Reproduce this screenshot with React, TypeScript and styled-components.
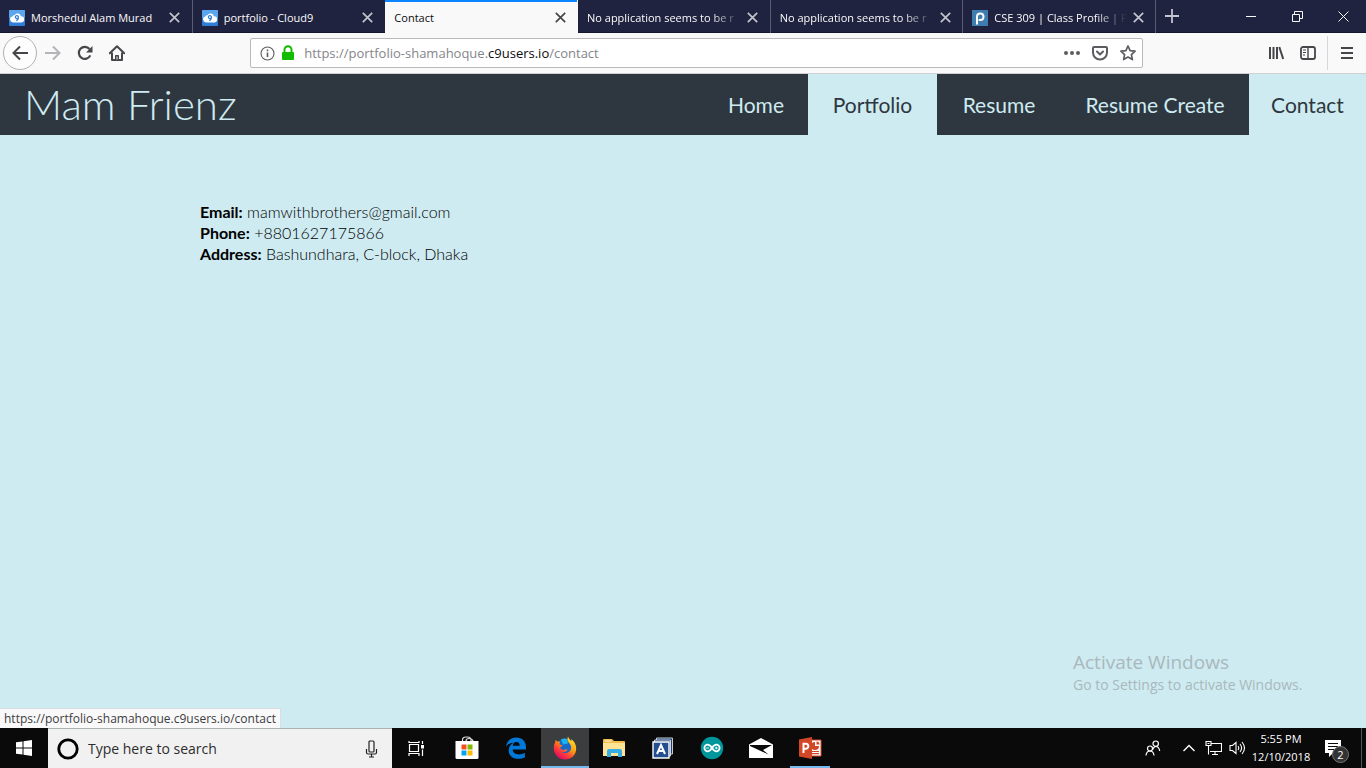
import React from "react";
import styled, { createGlobalStyle, css } from "styled-components";

const ui = `"Open Sans", "Noto Sans", sans-serif`;
const display = `Lato, "Open Sans", sans-serif`;
const ice = "#ceebf1";
const slate = "#2e3740";

const GlobalStyle = createGlobalStyle`
  *, *::before, *::after { box-sizing: border-box; }
  body { margin: 0; background: ${ice}; }
  button, input { font: inherit; color: inherit; }
  button { border: 0; padding: 0; background: none; }
  svg { display: block; flex: none; }
`;

const Screen = styled.div`
  display: flex;
  flex-direction: column;
  min-height: 100vh;
  font-family: ${ui};
`;

/* Browser tabs */
const TabBar = styled.div`
  display: flex;
  height: 33px;
  background: #20233f;
  border-bottom: 1px solid #14162b;
  color: #f9f9fa;
`;

const TabStrip = styled.div`
  display: flex;
  flex: 0 1 1156px;
  min-width: 0;
`;

const Tab = styled.div<{ $active?: boolean; $edge?: boolean }>`
  display: flex;
  align-items: center;
  flex: 1 1 0;
  min-width: 0;
  height: 33px;
  padding: 2px 10px 0 9px;
  border-right: 1px solid ${(p) => (p.$edge ? "transparent" : "#5a5c72")};
  ${(p) =>
    p.$active &&
    css`
      background: #f9f9fa;
      color: #0c0c0d;
      box-shadow: inset 0 2px #0a84ff;
      border-right-color: #f9f9fa;
    `}
`;

const TabTitle = styled.button`
  display: flex;
  align-items: center;
  gap: 6px;
  flex: 1;
  min-width: 0;
  height: 28px;
  font-size: 11px;
  font-weight: 500;
  text-align: left;
`;

const TabText = styled.span<{ $fade?: boolean }>`
  flex: 1;
  overflow: hidden;
  white-space: nowrap;
  ${(p) =>
    p.$fade &&
    css`
      margin-right: 4px;
      mask-image: linear-gradient(to left, transparent, #000 32px);
    `}
`;

const IconButton = styled.button<{ $w?: number; $h?: number }>`
  display: flex;
  align-items: center;
  justify-content: center;
  flex: none;
  width: ${(p) => p.$w ?? 32}px;
  height: ${(p) => p.$h ?? 32}px;
`;

const WindowButtons = styled.div`
  display: flex;
  margin-left: auto;
`;

/* Address toolbar */
const Toolbar = styled.div`
  display: flex;
  align-items: center;
  height: 41px;
  padding: 0 3px;
  background: #f9f9fa;
  border-bottom: 1px solid #d0d0d4;
  color: #45454a;
`;

const BackButton = styled(IconButton)`
  width: 34px;
  height: 34px;
  border: 1px solid #b1b1b5;
  border-radius: 50%;
  background: #fdfdfd;
`;

const Spring = styled.div`
  flex: 2 1 0;
`;

const AddressBar = styled.form`
  display: flex;
  align-items: center;
  flex: 15 1 0;
  min-width: 0;
  height: 30px;
  padding: 0 3px 0 9px;
  gap: 6px;
  background: #fff;
  border: 1px solid #b9b9bc;
  border-radius: 2px;
  color: #5d5d61;
`;

const Address = styled.div`
  flex: 1;
  min-width: 0;
  padding-left: 3px;
  overflow: hidden;
  white-space: nowrap;
  font-size: 13px;
  color: #85858a;

  b { color: #0c0c0d; font-weight: 400; }
`;

const Divider = styled.span`
  width: 1px;
  height: 34px;
  margin: 0 3px;
  background: #d7d7db;
`;

/* Web page */
const Page = styled.div`
  position: relative;
  display: flex;
  flex-direction: column;
  flex: 1;
  background: ${ice};
  font-family: ${display};
`;

const SiteHeader = styled.header`
  display: flex;
  justify-content: space-between;
  height: 61px;
  background: ${slate};
  color: ${ice};
`;

const Brand = styled.h1`
  margin: 0;
  padding-left: 24px;
  font-size: 42px;
  font-weight: 300;
  line-height: 60px;
  white-space: nowrap;
`;

const Nav = styled.nav`
  display: flex;
`;

const NavLink = styled.a<{ $lit?: boolean; $w: number }>`
  width: ${(p) => p.$w}px;
  text-align: center;
  font-size: 21px;
  line-height: 61px;
  white-space: nowrap;
  text-decoration: none;
  color: ${(p) => (p.$lit ? slate : ice)};
  background: ${(p) => (p.$lit ? ice : slate)};
`;

const ContactList = styled.address`
  padding: 66px 24px 0 200px;
  font-size: 16px;
  font-style: normal;
  font-weight: 300;
  line-height: 21px;
  color: #000;

  b { font-weight: 700; }
`;

const StatusUrl = styled.div`
  position: absolute;
  left: 0;
  bottom: 0;
  height: 20px;
  padding: 0 4px;
  background: #f9f9fa;
  border: solid #d7dde0;
  border-width: 1px 1px 0 0;
  font: 12px/20px ${ui};
  color: #3c3c40;
`;

const Watermark = styled.div`
  position: absolute;
  right: 56px;
  bottom: 33px;
  width: 237px;
  font: 14px/20px ${ui};
  color: #a9b8bc;
  white-space: nowrap;
`;

const WatermarkTitle = styled.div`
  font-size: 19px;
  line-height: 26px;
`;

/* Windows taskbar */
const Taskbar = styled.footer`
  display: flex;
  height: 40px;
  background: #0a0a0a;
  color: #fff;
`;

const SearchBox = styled.label`
  display: flex;
  align-items: center;
  flex: 0 1 344px;
  padding: 0 14px 0 9px;
  gap: 9px;
  background: #f1f1f1;
  border-top: 1px solid #adb3b5;
  color: #111;
`;

const SearchInput = styled.input`
  flex: 1;
  min-width: 0;
  padding: 0;
  border: 0;
  outline: 0;
  background: none;
  font-size: 14px;

  &::placeholder { color: #2d2d2d; opacity: 1; }
`;

const AppRow = styled.div`
  display: flex;
  gap: 1px;
`;

const AppButton = styled(IconButton)<{ $active?: boolean }>`
  width: 48px;
  height: 40px;
  background: ${(p) => (p.$active ? "#3c3d3e" : "none")};
  box-shadow: ${(p) => (p.$active ? "inset 0 -2px #76b9ed" : "none")};
`;

const TaskViewButton = styled(AppButton)`
  margin-right: 2px;
`;

const RunningButton = styled(AppButton)`
  width: 40px;
  margin-left: 4px;
  box-shadow: inset 0 -2px #76b9ed;
`;

const Tray = styled.div`
  display: flex;
  align-items: center;
  margin-left: auto;
`;

const Clock = styled.time`
  width: 64px;
  font-size: 11px;
  line-height: 18px;
  text-align: center;
  white-space: nowrap;
`;

const Notifications = styled(IconButton)`
  position: relative;
  width: 40px;
  height: 40px;
`;

const Badge = styled.span`
  position: absolute;
  left: 19px;
  top: 18px;
  width: 17px;
  height: 17px;
  border: 1px solid #777;
  border-radius: 50%;
  background: #333;
  font-size: 11px;
  line-height: 15px;
  text-align: center;
`;

const ShowDesktop = styled.button`
  width: 5px;
  height: 40px;
  margin-left: 8px;
  border-left: 1px solid #555;
`;

type Stroke = { s?: number; w?: number; d: string; c?: string; box?: number; fill?: string };
const Line = ({ s = 16, w = 2, d, c = "currentColor", box = 16, fill = "none" }: Stroke) => (
  <svg width={s} height={s} viewBox={`0 0 ${box} ${box}`} fill={fill} stroke={c} strokeWidth={w} aria-hidden>
    <path d={d} />
  </svg>
);

const CloudIcon = () => (
  <svg width="16" height="16" viewBox="0 0 16 16" aria-hidden>
    <rect width="16" height="16" rx="1" fill="#2f7fd8" />
    <rect width="16" height="8" rx="1" fill="#5ba5ee" />
    <path d="M4 12.5a3 3 0 0 1-.7-5.9 2.7 2.7 0 0 1 2.5-1.7A3.5 3.5 0 0 1 12 6.3a3.1 3.1 0 0 1 .2 6.2z" fill="#fff" />
    <path d="M9.4 7a1.5 1.4 0 1 0-1.3 1.5c.8 0 1.3-.5 1.3-1.5 0 2-.7 3.300-2.200 3.600" fill="none" stroke="#2f7fd8" strokeWidth="1.200" />
  </svg>
);

const PiazzaIcon = () => (
  <svg width="16" height="16" viewBox="0 0 16 16" aria-hidden>
    <rect width="16" height="16" fill="#3f7caf" />
    <path d="M5 14.500V6.500q0-3 3.300-3 3.200 0 3.200 3.300T8.300 10q-1 0-1.600-.5" fill="none" stroke="#fff" strokeWidth="2" />
  </svg>
);

const HomeIcon = () => (
  <svg width="16" height="16" viewBox="0 0 16 16" fill="none" stroke="currentColor" strokeWidth="2" strokeLinejoin="round" aria-hidden>
    <path d="M.8 8.300 8 1.300l7.200 7" strokeLinecap="round" />
    <path d="M3 7.500V15h10V7.500" />
    <path d="M6.500 15v-4.500h3V15z" fill="currentColor" strokeWidth="1" />
    <path d="M8 11.500v3" stroke="#f9f9fa" strokeWidth="1" />
  </svg>
);

const ReloadIcon = () => (
  <svg width="16" height="16" viewBox="0 0 16 16" fill="none" stroke="currentColor" strokeWidth="2.200" aria-hidden>
    <path d="M13.300 10.400A6 6 0 1 1 12.500 4" />
    <path d="M15.500 1v6.500H9z" fill="currentColor" stroke="none" />
  </svg>
);

const InfoIcon = () => (
  <svg width="15" height="15" viewBox="0 0 15 15" aria-hidden>
    <circle cx="7.500" cy="7.500" r="6.500" fill="none" stroke="#5d5d61" strokeWidth="1.100" />
    <path d="M7.500 6.500v4.500M7.500 3.500v1.800" stroke="#5d5d61" strokeWidth="1.600" />
  </svg>
);

const LockIcon = () => (
  <svg width="14" height="16" viewBox="0 0 14 16" aria-hidden>
    <path d="M3.500 8V4.800a3.500 3.500 0 0 1 7 0V8" fill="none" stroke="#12bc00" strokeWidth="2" />
    <rect x="1" y="7" width="12" height="8" rx="1" fill="#12bc00" />
  </svg>
);

const DotsIcon = () => (
  <svg width="16" height="16" viewBox="0 0 16 16" fill="currentColor" aria-hidden>
    <circle cx="2" cy="8" r="2" />
    <circle cx="8" cy="8" r="2" />
    <circle cx="14" cy="8" r="2" />
  </svg>
);

const PocketIcon = () => (
  <svg width="16" height="16" viewBox="0 0 16 16" fill="none" stroke="currentColor" strokeWidth="2" strokeLinejoin="round" strokeLinecap="round" aria-hidden>
    <path d="M2 2h12q1 0 1 1v4.500a7 7 0 0 1-14 0V3q0-1 1-1z" />
    <path d="m5 6.500 3 3 3-3" />
  </svg>
);

const StarIcon = () => (
  <svg width="16" height="16" viewBox="0 0 16 16" fill="none" stroke="currentColor" strokeWidth="1.700" strokeLinejoin="round" aria-hidden>
    <path d="m8 1 2.100 4.600 5 .6-3.700 3.400 1 5L8 12.100l-4.400 2.500 1-5L.9 6.200l5-.6z" />
  </svg>
);

const LibraryIcon = () => (
  <svg width="16" height="16" viewBox="0 0 16 16" fill="none" stroke="currentColor" strokeWidth="2" aria-hidden>
    <path d="M2 2v12M5.500 2v12M9 2v12M11.300 2l3.900 12" />
  </svg>
);

const SidebarIcon = () => (
  <svg width="16" height="16" viewBox="0 0 16 16" fill="none" stroke="currentColor" strokeWidth="1.800" aria-hidden>
    <rect x="1" y="2" width="14" height="12" rx="2" />
    <path d="M8 2v12" strokeWidth="1.400" />
    <path d="M3 5h3M3 7.500h3M3 10h2" strokeWidth="1" />
  </svg>
);

const RestoreIcon = () => (
  <svg width="11" height="11" viewBox="0 0 11 11" fill="none" stroke="currentColor" aria-hidden>
    <path d="M.5 3.500h7v7h-7zM2.500 3.500v-3h8v7h-3" />
  </svg>
);

const WindowsIcon = () => (
  <svg width="16" height="16" viewBox="0 0 16 16" fill="#fff" aria-hidden>
    <path d="M0 2.300 6.500 1.400V7.500H0zM7.500 1.200 16 0v7.500H7.500zM0 8.500h6.500v6.100L0 13.700zM7.500 8.500H16V16l-8.500-1.200z" />
  </svg>
);

const CortanaIcon = () => (
  <svg width="22" height="22" viewBox="0 0 22 22" aria-hidden>
    <circle cx="11" cy="11" r="9.200" fill="none" stroke="#000" strokeWidth="2.800" />
  </svg>
);

const MicIcon = () => (
  <svg width="13" height="18" viewBox="0 0 13 18" fill="none" stroke="#222" strokeWidth="1.200" aria-hidden>
    <rect x="4" y="1" width="5" height="11" rx="1" />
    <path d="M1.500 9v3.500q0 1.500 1.500 1.500h7q1.500 0 1.500-1.500V9M6.500 14v3M4 17h5" />
  </svg>
);

const TaskViewIcon = () => (
  <svg width="17" height="17" viewBox="0 0 17 17" fill="none" stroke="#fff" strokeWidth="1.200" aria-hidden>
    <path d="M1.500 4.500h9v7h-9zM1 1v1.500h10V1M1 16v-2.500h10V16M14.500 1v3M14.500 9.500V16" />
    <rect x="13" y="5" width="3" height="3.500" fill="#fff" stroke="none" />
  </svg>
);

const StoreIcon = () => (
  <svg width="24" height="24" viewBox="0 0 24 24" aria-hidden>
    <path d="M7.500 6V4Q7.500 1 11 1h1.500q3.500 0 3.500 3v2M11 6V5q0-2.500 3-2.500T18 5v1" fill="none" stroke="#ddd" strokeWidth="1.200" />
    <path d="M.5 5h23v16.500q0 1.500-1.500 1.500H2Q.5 23 .5 21.500z" fill="#fff" />
    <path d="M6.500 8.500h5v5h-5z" fill="#f25022" />
    <path d="M12.500 8.500h5v5h-5z" fill="#7fba00" />
    <path d="M6.500 14.500h5v5h-5z" fill="#00a4ef" />
    <path d="M12.500 14.500h5v5h-5z" fill="#ffb900" />
  </svg>
);

const EdgeIcon = () => (
  <svg width="20" height="22" viewBox="0 0 20 22" aria-hidden>
    <path
      d="M0 9.800C.8 4 4.800.5 10.300.5 16.500.5 20 4.700 20 10v2.500H6.700c.2 3.300 2.900 4.900 6.300 4.900 2.300 0 4.200-.6 5.900-1.700v4.500c-1.900 1.100-4.300 1.600-6.900 1.600-5.500 0-9.300-3.300-9.300-8.300 0-3.300 1.600-6.100 4.700-7.700C4.500 6 1.500 7.400 0 9.800zm6.800-1.100h6.900c0-2.300-1.200-3.600-3.300-3.600-2 0-3.300 1.400-3.600 3.600z"
      fill="#0078d7"
      fillRule="evenodd"
    />
  </svg>
);

const FirefoxIcon = () => (
  <svg width="24" height="24" viewBox="0 0 24 24" aria-hidden>
    <defs>
      <linearGradient id="fox" x1="0.900" y1="0" x2="0.200" y2="1">
        <stop offset="0.100" stopColor="#ffe226" />
        <stop offset="0.450" stopColor="#ff980e" />
        <stop offset="0.700" stopColor="#ff3b3d" />
        <stop offset="1" stopColor="#d8006e" />
      </linearGradient>
    </defs>
    <circle cx="12" cy="10.500" r="8" fill="#1668c9" />
    <path d="M8 3.500q3-1.500 6-.5l1 4.500-5 1z" fill="#1ab4f0" />
    <path
      d="M15 .5c.4 2 2.300 3.200 3.400 4.800-.2-.9-.2-1.400 0-2.100 2.900 2 4.800 5.700 4.800 9.300C23.200 19 18.300 23.500 12 23.500S.8 18.600.8 12.500c0-2.600.4-4.500 1.400-6.200L2.500 4l1.900 1.600c1-.2 1.900-.1 2.800.2-.7.900-.8 1.900-.5 2.700l2.800.7c-.3 1-1.500 1.500-2.300 2.100.3 2.300 2.900 3.300 5 2.300 1-.5 1.700-.4 2.300.1-1.100 2.300-3.800 3-6 2.200 4 2.800 9.600.5 9.600-4.300 0-2-.9-3.500-1.900-4.400C14.700 5.600 13.800 3 15 .5z"
      fill="url(#fox)"
    />
  </svg>
);

const FolderIcon = () => (
  <svg width="22" height="20" viewBox="0 0 22 20" aria-hidden>
    <path d="M0 2q0-1 1-1h8l2 2h10q1 0 1 1v14H0z" fill="#f0bd4b" />
    <path d="M0 5h22v13H0z" fill="#ffe394" />
    <path d="M2 2.500h6v1H2z" fill="#fff" />
    <path d="M4 19v-6q0-2 2-2h11q2 0 2 2v6h-4v-4H8v4z" fill="#36aee5" />
  </svg>
);

const CardsIcon = () => (
  <svg width="22" height="22" viewBox="0 0 22 22" aria-hidden>
    <path d="M4.500 1h16v16h-16z" fill="#1b3f74" stroke="#c4cbd3" />
    <path d="M2.500 3h16v16h-16z" fill="#1b3f74" stroke="#d2d7dd" />
    <path d="M1 5h16v16H1z" fill="#234f91" stroke="#fff" strokeWidth="1.400" />
    <path d="m5 17 4-9 4 9M6.500 14h5" fill="none" stroke="#fff" strokeWidth="2" />
  </svg>
);

const ArduinoIcon = () => (
  <svg width="24" height="24" viewBox="0 0 24 24" fill="none" stroke="#fff" aria-hidden>
    <circle cx="12" cy="12" r="11.200" fill="#00979c" stroke="none" />
    <path d="M12 12C10.500 9.700 9.300 8.700 7.700 8.700a3.300 3.300 0 0 0 0 6.600c1.600 0 2.800-1 4.300-3.300s2.700-3.300 4.300-3.300a3.300 3.300 0 0 1 0 6.600c-1.600 0-2.800-1-4.300-3.300z" strokeWidth="1.800" />
    <path d="M6.300 12h2.600M15 12h2.600M16.300 10.700v2.600" />
  </svg>
);

const MailIcon = () => (
  <svg width="24" height="20" viewBox="0 0 24 20" aria-hidden>
    <path d="M0 6.500 12 0l12 6.500V20H0z" fill="#fff" />
    <path d="M1 7h22l-9 5 5.500 4.500L1 8z" fill="#0a0a0a" />
  </svg>
);

const SlidesIcon = () => (
  <svg width="24" height="22" viewBox="0 0 24 22" aria-hidden>
    <path d="M11 3h12v16H11z" fill="#fff" stroke="#d24726" />
    <path d="M17 5v4h4a4 4 0 1 1-4-4z" fill="#d24726" />
    <path d="M18.500 4.500a3 3 0 0 1 3 3h-3z" fill="#d24726" />
    <path d="M14 14.500h7M14 16.700h7" stroke="#d24726" strokeWidth="1.200" />
    <path d="M1 2.500 14 0v22L1 19.500z" fill="#d24726" />
    <path d="M5.500 16V6.800h2.300a2.400 2.400 0 0 1 0 5H5.500" fill="none" stroke="#fff" strokeWidth="2" />
  </svg>
);

const PeopleIcon = () => (
  <svg width="16" height="16" viewBox="0 0 16 16" fill="none" stroke="#fff" strokeWidth="1.200" aria-hidden>
    <circle cx="10.700" cy="3.700" r="2.700" />
    <path d="M8 9.500q.5-3 2.700-3 3.300 0 4 4.500" />
    <circle cx="5" cy="8.500" r="2.500" />
    <path d="M1 15.500Q1.500 11 5 11t4 4.500" />
  </svg>
);

const NetworkIcon = () => (
  <svg width="17" height="16" viewBox="0 0 17 16" fill="none" stroke="#fff" strokeWidth="1.100" aria-hidden>
    <path d="M6 3.500h10.500v8H5M3.500 6v8.500M7 14.500h6M10 11.500v3" />
    <path d="M1 1.500h5v4H1zM2.500 3.500h2" />
  </svg>
);

const SpeakerIcon = () => (
  <svg width="17" height="16" viewBox="0 0 17 16" fill="none" stroke="#fff" strokeWidth="1.100" aria-hidden>
    <path d="M1 5.500h2.500L7 2.500v11l-3.500-3H1zM9 6q1.500 2 0 4M11 4q3.200 4 0 8M13 2q5 6 0 12" />
  </svg>
);

const NoteIcon = () => (
  <svg width="16" height="17" viewBox="0 0 16 17" aria-hidden>
    <path d="M0 0h16v13H8l-4 4v-4H0z" fill="#fff" />
    <path d="M3 3.500h10M3 6.500h10M3 9.500h6" stroke="#0a0a0a" strokeWidth="1.200" />
  </svg>
);

const cross = "M3 3l10 10M13 3L3 13";

const tabs = [
  { title: "Morshedul Alam Murad", icon: <CloudIcon /> },
  { title: "portfolio - Cloud9", icon: <CloudIcon />, edge: true },
  { title: "Contact", active: true },
  { title: "No application seems to be r", fade: true },
  { title: "No application seems to be r", fade: true },
  { title: "CSE 309 | Class Profile | Pi", icon: <PiazzaIcon />, fade: true },
];

const links = [
  { label: "Home", w: 104 },
  { label: "Portfolio", w: 129, lit: true },
  { label: "Resume", w: 124 },
  { label: "Resume Create", w: 188 },
  { label: "Contact", w: 117, lit: true },
];

export default function App() {
  return (
    <Screen>
      <GlobalStyle />
      <TabBar>
        <TabStrip>
          {tabs.map((t, i) => (
            <Tab key={i} $active={t.active} $edge={t.edge}>
              <TabTitle>
                {t.icon}
                <TabText $fade={t.fade}>{t.title}</TabText>
              </TabTitle>
              <IconButton $w={14} $h={28} aria-label="Close tab">
                <Line s={15} w={1.8} d={cross} c={t.active ? "#45454a" : "#c3c4cd"} />
              </IconButton>
            </Tab>
          ))}
        </TabStrip>
        <IconButton aria-label="New tab">
          <Line w={1.8} d="M8 1v14M1 8h14" c="#c3c4cd" />
        </IconButton>
        <WindowButtons>
          <IconButton $w={46} aria-label="Minimize">
            <Line s={10} box={10} w={1} d="M0 5.500h10" />
          </IconButton>
          <IconButton $w={46} aria-label="Restore">
            <RestoreIcon />
          </IconButton>
          <IconButton $w={46} aria-label="Close">
            <Line s={11} box={11} w={1} d="M.5.5l10 10M10.500.5l-10 10" />
          </IconButton>
        </WindowButtons>
      </TabBar>

      <Toolbar>
        <BackButton aria-label="Back">
          <Line d="M16 8H1.500M8 1.500 1.500 8 8 14.500" />
        </BackButton>
        <IconButton aria-label="Forward">
          <Line d="M0 8h14.500M8 1.500 14.500 8 8 14.500" c="#b4b4b7" />
        </IconButton>
        <IconButton aria-label="Reload">
          <ReloadIcon />
        </IconButton>
        <IconButton aria-label="Home">
          <HomeIcon />
        </IconButton>
        <Spring />
        <AddressBar>
          <InfoIcon />
          <LockIcon />
          <Address>
            https://portfolio-shamahoque.<b>c9users.io</b>/contact
          </Address>
          <IconButton type="button" $w={22} $h={28} aria-label="Page actions">
            <DotsIcon />
          </IconButton>
          <IconButton type="button" $w={22} $h={28} aria-label="Save to Pocket">
            <PocketIcon />
          </IconButton>
          <IconButton type="button" $w={22} $h={28} aria-label="Bookmark">
            <StarIcon />
          </IconButton>
        </AddressBar>
        <Spring />
        <IconButton aria-label="Library">
          <LibraryIcon />
        </IconButton>
        <IconButton aria-label="Sidebars">
          <SidebarIcon />
        </IconButton>
        <Divider />
        <IconButton aria-label="Menu">
          <Line d="M2 3h12M2 8h12M2 13h12" />
        </IconButton>
      </Toolbar>

      <Page>
        <SiteHeader>
          <Brand>Mam Frienz</Brand>
          <Nav>
            {links.map((l) => (
              <NavLink key={l.label} href="#" $lit={l.lit} $w={l.w}>
                {l.label}
              </NavLink>
            ))}
          </Nav>
        </SiteHeader>
        <ContactList>
          <div><b>Email:</b> mamwithbrothers@gmail.com</div>
          <div><b>Phone:</b> +8801627175866</div>
          <div><b>Address:</b> Bashundhara, C-block, Dhaka</div>
        </ContactList>
        <StatusUrl>https://portfolio-shamahoque.c9users.io/contact</StatusUrl>
        <Watermark>
          <WatermarkTitle>Activate Windows</WatermarkTitle>
          Go to Settings to activate Windows.
        </Watermark>
      </Page>

      <Taskbar>
        <AppButton aria-label="Start"><WindowsIcon /></AppButton>
        <SearchBox>
          <CortanaIcon />
          <SearchInput placeholder="Type here to search" aria-label="Search" />
          <MicIcon />
        </SearchBox>
        <AppRow>
          <TaskViewButton aria-label="Task view"><TaskViewIcon /></TaskViewButton>
          <AppButton aria-label="Store"><StoreIcon /></AppButton>
          <AppButton aria-label="Edge"><EdgeIcon /></AppButton>
          <AppButton aria-label="Firefox" $active><FirefoxIcon /></AppButton>
          <AppButton aria-label="File Explorer"><FolderIcon /></AppButton>
          <AppButton aria-label="Dictionary"><CardsIcon /></AppButton>
          <AppButton aria-label="Arduino"><ArduinoIcon /></AppButton>
          <AppButton aria-label="Mail"><MailIcon /></AppButton>
          <RunningButton aria-label="PowerPoint"><SlidesIcon /></RunningButton>
        </AppRow>
        <Tray>
          <IconButton $w={48} aria-label="People"><PeopleIcon /></IconButton>
          <IconButton $w={24} aria-label="Show hidden icons">
            <Line s={12} box={12} w={1.4} d="M.5 9 6 3.500 11.500 9" />
          </IconButton>
          <IconButton $w={24} aria-label="Network"><NetworkIcon /></IconButton>
          <IconButton $w={24} aria-label="Volume"><SpeakerIcon /></IconButton>
          <Clock>
            5:55 PM
            <br />
            12/10/2018
          </Clock>
          <Notifications aria-label="Notifications">
            <NoteIcon />
            <Badge>2</Badge>
          </Notifications>
          <ShowDesktop aria-label="Show desktop" />
        </Tray>
      </Taskbar>
    </Screen>
  );
}
